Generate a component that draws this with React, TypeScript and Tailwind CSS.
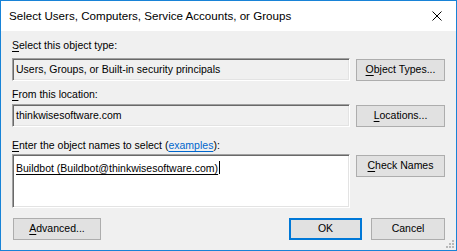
import React from "react";

const font = { fontFamily: '"Liberation Sans", Arial, sans-serif' };

type BtnProps = {
  label: React.ReactNode;
  className?: string;
  primary?: boolean;
};

// Win10 push button
const Btn: React.FC<BtnProps> = ({ label, className = "", primary }) => (
  <div
    className={`flex h-[22px] items-center justify-center bg-[#e1e1e1] text-[10.5px] text-black ${
      primary ? "border-2 border-[#0078d7]" : "border border-[#adadad]"
    } ${className}`}
  >
    {label}
  </div>
);

const U: React.FC<{ children: React.ReactNode }> = ({ children }) => (
  <span className="underline decoration-1 underline-offset-[2px]">{children}</span>
);

const ReadOnlyBox: React.FC<{ text: string }> = ({ text }) => (
  <div className="flex h-[23px] w-[338px] items-center border border-t-[#a0a0a0] border-l-[#a0a0a0] border-b-white border-r-white bg-[#f0f0f0] pl-[3px] text-[10.5px] text-black shadow-[inset_1px_1px_0_#696969,inset_-1px_-1px_0_#e3e3e3]">
    {text}
  </div>
);

export default function App() {
  return (
    <div
      className="relative flex h-[251px] w-[457px] flex-col border border-[#1883d7] bg-[#f0f0f0]"
      style={font}
    >
      {/* Title bar */}
      <div className="flex h-[30px] items-center justify-between bg-white pl-[8px] pr-[10px]">
        <span className="text-[11.6px] text-black">
          Select Users, Computers, Service Accounts, or Groups
        </span>
        <svg width="10" height="10" viewBox="0 0 10 10" className="mr-[4px]">
          <path d="M0.5 0.5L9.5 9.5M9.5 0.5L0.5 9.5" stroke="#000" strokeWidth="1" />
        </svg>
      </div>

      {/* Body */}
      <div className="flex flex-col pl-[11px] text-[10.5px] text-black">
        <div className="mt-[8px] h-[13px] leading-[13px]">
          <U>S</U>elect this object type:
        </div>
        <div className="mt-[6px] flex items-start gap-[6px]">
          <ReadOnlyBox text="Users, Groups, or Built-in security principals" />
          <Btn
            className="mt-[1px] w-[89px]"
            label={
              <span>
                <U>O</U>bject Types...
              </span>
            }
          />
        </div>

        <div className="mt-[7px] h-[13px] leading-[13px]">
          <U>F</U>rom this location:
        </div>
        <div className="mt-[3px] flex items-start gap-[6px]">
          <ReadOnlyBox text="thinkwisesoftware.com" />
          <Btn
            className="mt-[1px] w-[89px]"
            label={
              <span>
                <U>L</U>ocations...
              </span>
            }
          />
        </div>

        <div className="mt-[12px] h-[13px] leading-[13px]">
          <U>E</U>nter the object names to select (
          <span className="text-[#0066cc] underline decoration-1 underline-offset-[2px]">examples</span>
          ):
        </div>
        <div className="mt-[2px] flex items-start gap-[6px]">
          <div className="h-[54px] w-[338px] border border-t-[#a0a0a0] border-l-[#a0a0a0] border-b-white border-r-white bg-white pl-[3px] pt-[4px] shadow-[inset_1px_1px_0_#696969,inset_-1px_-1px_0_#e3e3e3]">
            <span className="underline decoration-1 underline-offset-[2px]">
              Buildbot (Buildbot@thinkwisesoftware.com)
            </span>
            <span className="ml-[1px] inline-block h-[13px] w-[1px] translate-y-[2px] bg-black" />
          </div>
          <Btn
            className="mt-[1px] w-[89px]"
            label={
              <span>
                <U>C</U>heck Names
              </span>
            }
          />
        </div>

        <div className="mt-[10px] flex items-center pr-[11px]">
          <Btn
            className="ml-[1px] w-[88px]"
            label={
              <span>
                <U>A</U>dvanced...
              </span>
            }
          />
          <div className="flex-1" />
          <Btn primary className="w-[73px]" label="OK" />
          <Btn className="ml-[9px] w-[74px]" label="Cancel" />
        </div>
      </div>

      {/* size grip */}
      <svg width="10" height="10" viewBox="0 0 10 10" className="absolute bottom-[1px] right-[1px]">
        <rect x="7" y="1" width="2" height="2" fill="#b8b8b8" />
        <rect x="4" y="4" width="2" height="2" fill="#b8b8b8" />
        <rect x="7" y="4" width="2" height="2" fill="#b8b8b8" />
        <rect x="1" y="7" width="2" height="2" fill="#b8b8b8" />
        <rect x="4" y="7" width="2" height="2" fill="#b8b8b8" />
        <rect x="7" y="7" width="2" height="2" fill="#b8b8b8" />
      </svg>
    </div>
  );
}
